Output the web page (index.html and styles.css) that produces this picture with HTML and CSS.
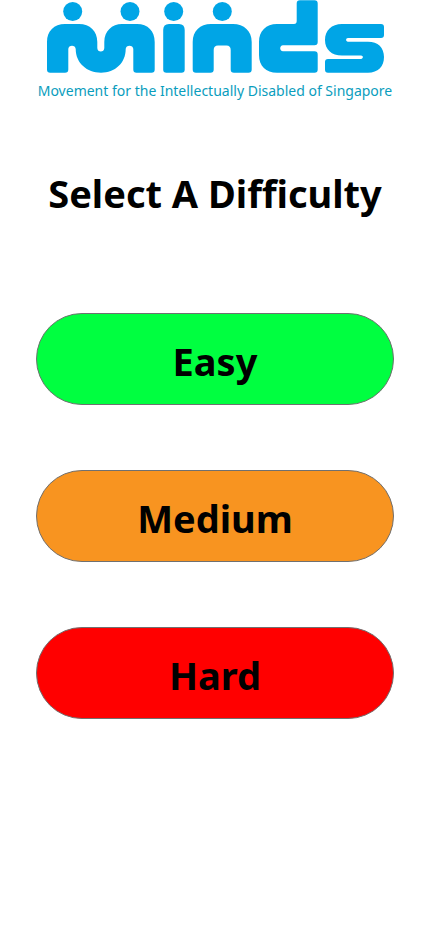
FILE: index.html
```html
<!DOCTYPE html>
<html lang="en">
<head>
<meta charset="utf-8">
<meta name="viewport" content="width=device-width, initial-scale=1">
<title>Select A Difficulty</title>
<link rel="stylesheet" href="styles.css">
</head>
<body>
<header class="brand">
  <svg class="logo" viewBox="36 0 358 78" role="img" aria-label="minds">
    <circle cx="72.7" cy="11.5" r="9.5"/>
    <circle cx="130" cy="11.5" r="9.5"/>
    <circle cx="173.7" cy="11.5" r="9.5"/>
    <circle cx="222.3" cy="11.5" r="9.5"/>
    <path d="M47 42C47 31 54 24 65 24H79C90 24 97.3 31 97.3 42V48C97.3 52.8 104.3 52.8 104.3 48V42C104.3 31 112 24 122 24H137C148 24 154.7 31 154.7 42V69.5Q154.7 72.7 151.5 72.7H136.5Q133.3 72.7 133.3 69.5V49C133.3 44.5 125.7 44.5 125.7 49C125.7 63 115 72.7 101 72.7S75.7 63 75.7 49C75.7 44.5 68.3 44.5 68.3 49V69.5Q68.3 72.7 65 72.7H50.2Q47 72.7 47 69.5Z"/>
    <path d="M163.2 30Q163.2 24 169 24H179Q184.7 24 184.7 30V69.5Q184.7 72.7 181.5 72.7H166.4Q163.2 72.7 163.2 69.5Z"/>
    <path d="M192.7 42C192.7 31 200 24 211 24H233C244 24 251.7 31 251.7 42V69.5Q251.7 72.7 248.5 72.7H234Q230.7 72.7 230.7 69.5V50Q230.7 45.5 226.5 45.5H218Q213.7 45.5 213.7 50V69.5Q213.7 72.7 210.5 72.7H196Q192.7 72.7 192.7 69.5Z"/>
    <path d="M259 42C259 31 266 24 277 24H294Q296.7 24 296.7 21V3.5Q296.7 .3 300 .3H314.5Q317.7 .3 317.7 3.5V42Q317.7 45.3 314.5 45.3H283C279.3 45.3 279.3 51.3 283 51.3H314.5Q317.7 51.3 317.7 54.5V69.5Q317.7 72.7 314.5 72.7H277C266 72.7 259 66 259 55Z"/>
    <path d="M342 24H381Q384 24 384 27V35Q384 38 381 38H348C345.5 38 345.5 41.7 348 41.7H368C378 41.7 384 47.5 384 57C384 66.5 378 72.7 368 72.7H328Q325 72.7 325 69.5V62Q325 59 328 59H361C363.5 59 363.5 55.6 361 55.6H342C331.5 55.6 325 49.5 325 40C325 30.5 331.5 24 342 24Z"/>
  </svg>
  <p class="tagline">Movement for the Intellectually Disabled of Singapore</p>
</header>
<main class="menu">
  <h1 class="title">Select A Difficulty</h1>
  <div class="choices">
    <button class="choice easy" type="button">Easy</button>
    <button class="choice medium" type="button">Medium</button>
    <button class="choice hard" type="button">Hard</button>
  </div>
</main>
</body>
</html>
```
FILE: styles.css
```css
* {
  box-sizing: border-box;
}

body {
  margin: 0;
  padding: 0 36px;
  background: #fff;
  color: #000;
  font-family: "Segoe UI", "Noto Sans", "Open Sans", sans-serif;
}

.logo {
  display: block;
  width: 100%;
  fill: #00a5e6;
}

.tagline {
  margin: 0;
  color: #0a9dbd;
  font-size: 14px;
  line-height: 26px;
  text-align: center;
  white-space: nowrap;
}

.title {
  margin: 62px 0 92px;
  font-size: 38px;
  font-weight: 700;
  line-height: 55px;
  text-align: center;
  white-space: nowrap;
}

.choices {
  display: flex;
  flex-direction: column;
  gap: 65px;
}

.choice {
  width: 100%;
  height: 92px;
  padding: 4px 0 0;
  border: 1px solid #707070;
  border-radius: 46px;
  color: #000;
  font-family: inherit;
  font-size: 38px;
  font-weight: 700;
  line-height: 55px;
}

.easy {
  background: #00ff40;
}

.medium {
  background: #f89420;
}

.hard {
  background: #f00;
}
```
